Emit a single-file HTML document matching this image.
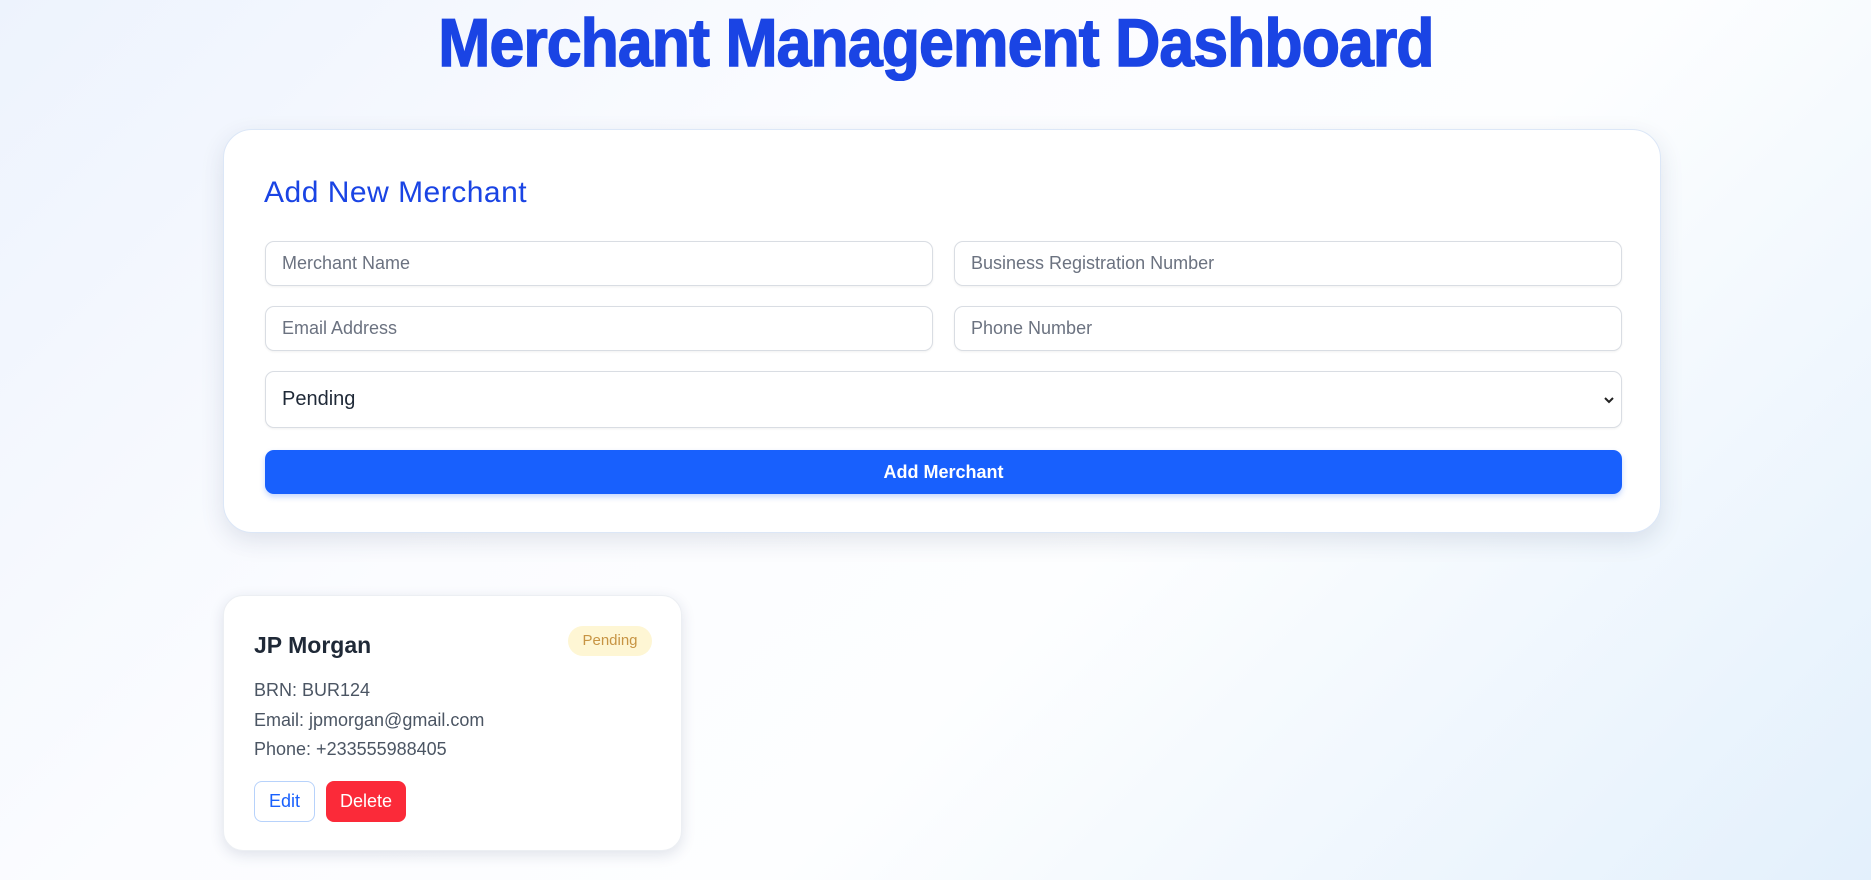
<!DOCTYPE html>
<html><head><meta charset="utf-8"><style>
*{box-sizing:border-box;margin:0;padding:0}
html,body{width:1871px;height:880px;overflow:hidden}
body{font-family:"Liberation Sans",sans-serif;background:linear-gradient(135deg,#edf3fd 0%,#fbfcff 35%,#fdfeff 60%,#e3f0fc 100%);position:relative}
h1{position:absolute;top:4px;left:0;width:1871px;text-align:center;color:#1a44e4;font-size:68px;font-weight:900;letter-spacing:-1px;-webkit-text-stroke:1.5px #1a44e4}
h1 span{display:inline-block;transform:scaleX(0.92)}
.form{position:absolute;left:223px;top:129px;width:1438px;height:404px;background:#fff;border:1px solid #dce7f7;border-radius:29px;box-shadow:0 8px 24px rgba(30,50,90,.12)}
.form h2{position:absolute;left:40px;top:46px;font-size:30px;font-weight:400;color:#1a44e4;letter-spacing:0.5px}
.in{position:absolute;height:45px;border:1px solid #d9dde3;border-radius:9px;background:#fff;box-shadow:0 1px 2px rgba(0,0,0,.06);font-size:18px;color:#6b7280;padding-left:16px;line-height:43px}
.btn{position:absolute;left:41px;top:320px;width:1357px;height:44px;background:#1860fd;border-radius:9px;color:#fff;font-weight:700;font-size:18px;text-align:center;line-height:44px;box-shadow:0 3px 6px rgba(24,96,253,.25)}
.card{position:absolute;left:223px;top:595px;width:459px;height:256px;background:#fff;border:1px solid #eceff3;border-radius:20px;box-shadow:0 4px 14px rgba(30,50,90,.13)}
.card .t{position:absolute;left:30px;top:36px;font-size:23px;font-weight:700;color:#1f2937}
.badge{position:absolute;left:344px;top:30px;width:84px;height:30px;border-radius:15px;background:#fef6d4;color:#c79443;font-size:15px;text-align:center;line-height:30px}
.l{position:absolute;left:30px;font-size:18px;color:#4b5563}
.edit{position:absolute;left:30px;top:185px;width:61px;height:41px;border:1px solid #b7d2fb;border-radius:8px;color:#1860fd;font-size:18px;text-align:center;line-height:39px}
.del{position:absolute;left:102px;top:185px;width:80px;height:41px;border-radius:8px;background:#fb2a39;color:#fff;font-size:18px;text-align:center;line-height:41px}
</style></head><body>
<h1><span>Merchant Management Dashboard</span></h1>
<div class="form">
<h2>Add New Merchant</h2>
<div class="in" style="left:41px;top:111px;width:668px">Merchant Name</div>
<div class="in" style="left:730px;top:111px;width:668px">Business Registration Number</div>
<div class="in" style="left:41px;top:176px;width:668px">Email Address</div>
<div class="in" style="left:730px;top:176px;width:668px">Phone Number</div>
<div class="in" style="left:41px;top:241px;width:1357px;height:57px;line-height:55px;font-size:20px;color:#1f2937">Pending
<svg style="position:absolute;right:6px;top:23px" width="12" height="10" viewBox="0 0 12 10"><path d="M2 3l4 4 4-4" fill="none" stroke="#222" stroke-width="2"/></svg></div>
<div class="btn">Add Merchant</div>
</div>
<div class="card">
<div class="t">JP Morgan</div>
<div class="badge">Pending</div>
<div class="l" style="top:84px">BRN: BUR124</div>
<div class="l" style="top:114px">Email: jpmorgan@gmail.com</div>
<div class="l" style="top:143px">Phone: +233555988405</div>
<div class="edit">Edit</div>
<div class="del">Delete</div>
</div>
</body></html>
